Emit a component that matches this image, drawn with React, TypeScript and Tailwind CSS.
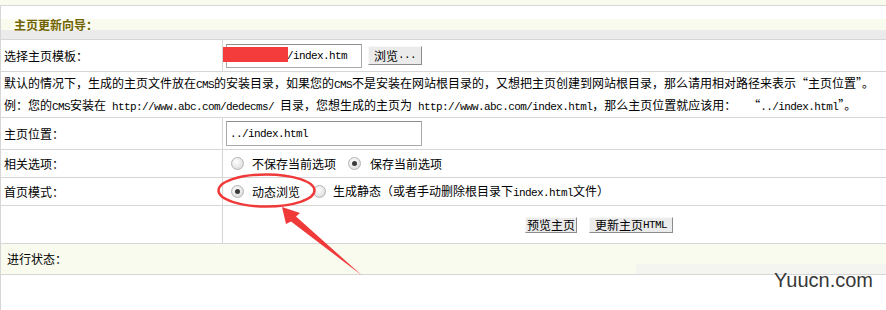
import type { ReactNode } from "react";

const line = "border-[#d6d6d6]";

function M({ children }: { children: ReactNode }) {
  return (
    <span className="font-['Liberation_Mono',monospace] text-[11px] tracking-[-0.6px]">
      {children}
    </span>
  );
}

function Radio({ checked }: { checked?: boolean }) {
  return (
    <span className="flex h-[13px] w-[13px] items-center justify-center rounded-full border border-[#b4b4b4] bg-[radial-gradient(circle_at_40%_35%,#ffffff,#d4d4d4)]">
      {checked && <span className="h-[5px] w-[5px] rounded-full bg-[#3a3a3a]" />}
    </span>
  );
}

function Btn({ children, className }: { children: ReactNode; className: string }) {
  return (
    <button
      className={`flex items-center justify-center border border-t-[#f8f8f8] border-l-[#f8f8f8] border-r-[#8c8c8c] border-b-[#8c8c8c] bg-[#ebebeb] text-[12px] leading-none ${className}`}
    >
      {children}
    </button>
  );
}

function Row({
  label,
  children,
  className,
}: {
  label: string;
  children?: ReactNode;
  className: string;
}) {
  return (
    <div className={`grid grid-cols-[222px_1fr] border-b ${line} ${className}`}>
      <div className={`flex items-center border-r ${line} pl-[3px]`}>{label}</div>
      <div className="flex items-center">{children}</div>
    </div>
  );
}

export default function App() {
  return (
    <div className="relative h-[310px] w-[886px] overflow-hidden bg-white font-['Noto_Sans_CJK_SC',sans-serif] text-[12px] leading-[16px] text-black">
      <div className="h-[5px] bg-[#f9fbef]" />
      <div className={`border-t border-l ${line}`}>
        <div className="h-[13px]" />
        <div className="h-[11px] bg-[#f9fbef] pl-[13px] text-[12px] leading-[11px] font-bold text-[#716400]">
          主页更新向导：
        </div>
        <div className={`h-[10px] border-b bg-[#ebebeb] ${line}`} />

        <Row label="选择主页模板：" className="h-[32px]">
          <div className="flex items-center pl-[3px]">
            <div className="flex h-[24px] w-[136px] items-center border border-[#a9a9a9] border-t-[#8f8f8f] pl-[60px]">
              <M>/index.htm</M>
            </div>
            <Btn className="ml-[6px] h-[19px] w-[54px]">
              浏览<M>...</M>
            </Btn>
          </div>
        </Row>

        <div className={`whitespace-pre border-b pt-[1px] pl-[3px] leading-[20px] ${line}`}>
          默认的情况下，生成的主页文件放在<M>CMS</M>的安装目录，如果您的<M>CMS</M>
          不是安装在网站根目录的，又想把主页创建到网站根目录，那么请用相对路径来表示“主页位置”。
          <br />
          例：您的<M>CMS</M>安装在<M> http://www.abc.com/dedecms/ </M>目录，您想生成的主页为
          <M> http://www.abc.com/index.html</M>，那么主页位置就应该用：<M>  </M>“<M>../index.html</M>”。
        </div>

        <Row label="主页位置：" className="h-[32px]">
          <div className="pl-[3px]">
            <div className="flex h-[25px] w-[196px] items-center border border-[#a9a9a9] border-t-[#8f8f8f] pl-[3px]">
              <M>../index.html</M>
            </div>
          </div>
        </Row>

        <Row label="相关选项：" className="h-[28px]">
          <div className="flex items-center pl-[8px]">
            <Radio />
            <span className="ml-[8px]">不保存当前选项</span>
            <span className="ml-[12px]">
              <Radio checked />
            </span>
            <span className="ml-[9px]">保存当前选项</span>
          </div>
        </Row>

        <Row label="首页模式：" className="h-[28px]">
          <div className="flex items-center pl-[8px]">
            <Radio checked />
            <span className="ml-[8px]">动态浏览</span>
            <span className="ml-[13px]">
              <Radio />
            </span>
            <span className="ml-[7px]">
              生成静态（或者手动删除根目录下<M>index.html</M>文件）
            </span>
          </div>
        </Row>

        <Row label="" className="h-[38px]">
          <div className="flex items-center pl-[302px] pt-[1px]">
            <Btn className="h-[16px] w-[52px]">预览主页</Btn>
            <Btn className="ml-[12px] h-[16px] w-[84px]">
              更新主页<M>HTML</M>
            </Btn>
          </div>
        </Row>

        <div className={`flex h-[31px] items-center border-b bg-[#f9fbef] pl-[6px] ${line}`}>
          进行状态：
        </div>
        <div className="h-[60px]" />
      </div>

      {/* redaction block over the template path */}
      <div className="absolute left-[223px] top-[47px] h-[15px] w-[65px] bg-[#f43c3c]" />

      {/* annotation: ellipse + arrow */}
      <svg
        className="pointer-events-none absolute left-0 top-0"
        width="886"
        height="310"
        viewBox="0 0 886 310"
      >
        <ellipse
          cx="266.5"
          cy="190.5"
          rx="48"
          ry="16"
          fill="none"
          stroke="#f03a3a"
          strokeWidth="2.5"
        />
        <polygon
          points="282,207 300,213 296,216.5 362,275.5 291,221.5 286,224"
          fill="#f03a3a"
        />
      </svg>

      {/* watermark */}
      <div className="absolute left-[636px] top-[264px] h-[10px] w-[250px] bg-[#f3f4ef]/90" />
      <div className="absolute right-[13px] top-[270px] font-['Liberation_Sans',sans-serif] text-[20px] leading-none text-[#383838]">
        Yuucn.com
      </div>
    </div>
  );
}
